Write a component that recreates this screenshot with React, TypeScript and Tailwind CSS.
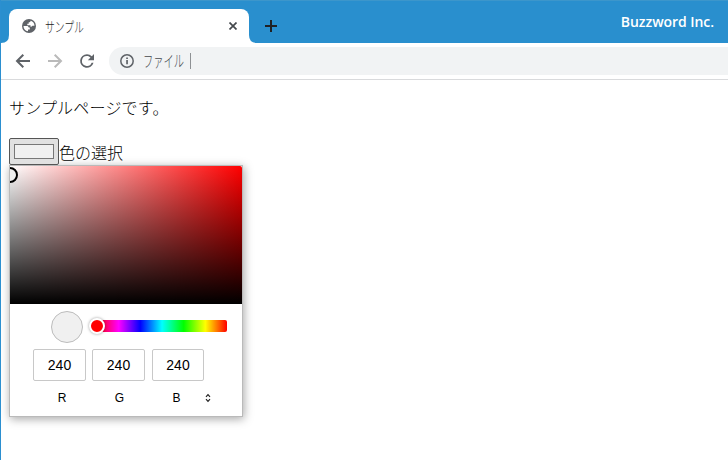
const ui = "font-['Liberation_Sans','Noto_Sans_CJK_JP',sans-serif]";
const jp = "font-['Noto_Sans_CJK_JP',sans-serif]";

function Tab() {
  return (
    <div className="relative ml-[8px] mt-[9px] flex h-[34px] w-[240px] items-center rounded-t-[8px] bg-white">
      <svg className="absolute -left-[8px] bottom-0 size-2" viewBox="0 0 8 8">
        <path d="M8 0v8H0q8 0 8-8z" fill="#fff" />
      </svg>
      <svg className="absolute -right-[8px] bottom-0 size-2" viewBox="0 0 8 8">
        <path d="M0 0v8h8q-8 0-8-8z" fill="#fff" />
      </svg>
      <svg className="ml-[13px] size-[14px] shrink-0" viewBox="0 0 14 14">
        <circle cx="7" cy="7" r="7" fill="#5f6368" />
        <path
          d="M1.5 7h3.2c1.3 0 1.8.6 2 1.5h1.1v2.1H6v1.7A5.5 5.5 0 0 1 1.5 7zM8.6 1.7c-.1 1.1-.7 1.5-1.9 1.5v1.6H5.3v1.4h3.2v1.6c1 .1 1.6-.3 1.9-1.1h2.1A5.5 5.5 0 0 0 8.6 1.7z"
          fill="#fff"
        />
      </svg>
      <span className={`${jp} ml-[9px] w-[56px] origin-left scale-x-[0.7] whitespace-nowrap text-[14px] font-light leading-4 text-[#222]`}>サンプル</span>
      <svg className="ml-auto mr-[12px] size-[8px]" viewBox="0 0 8 8">
        <path d="M.5.5l7 7M7.5.5l-7 7" stroke="#45494d" strokeWidth="1.7" />
      </svg>
    </div>
  );
}

function Toolbar() {
  return (
    <div className="flex h-[37px] items-center border-b border-[#d9dadc] bg-white">
      <svg className="ml-[14px] size-[16px] shrink-0" viewBox="0 0 16 16" fill="none" stroke="#5f6368" strokeWidth="2">
        <path d="M15 8H2.5M8.3 1.7L2 8l6.3 6.3" />
      </svg>
      <svg className="ml-[16px] size-[16px] shrink-0" viewBox="0 0 16 16" fill="none" stroke="#bababa" strokeWidth="2">
        <path d="M1 8h12.5M7.7 1.7L14 8l-6.3 6.3" />
      </svg>
      <svg className="ml-[16px] size-[16px] shrink-0" viewBox="0 0 16 16">
        <path d="M12.8 3.2A6.7 6.7 0 0 0 8 1.2a6.8 6.8 0 1 0 6.5 8.6h-1.9A5 5 0 1 1 8 3c1.4 0 2.6.6 3.5 1.5L8.8 7.2H15V1z" fill="#5f6368" />
      </svg>
      <div className="ml-[14px] flex h-7 flex-1 items-center rounded-l-full bg-[#f1f3f4]">
        <svg className="ml-[11px] size-[14px]" viewBox="0 0 14 14">
          <circle cx="7" cy="7" r="6.2" fill="none" stroke="#5f6368" strokeWidth="1.5" />
          <path d="M6.2 6h1.7v4.3H6.2zM6.2 3.4h1.7V5H6.2z" fill="#5f6368" />
        </svg>
        <span className="ml-[9px] w-[47px]">
          <span className={`${jp} relative -top-px block w-16 origin-left scale-x-[0.64] whitespace-nowrap text-[16px] font-light leading-5 text-[#45494d]`}>ファイル</span>
        </span>
        <span className="h-4 w-px bg-[#8e9194]" />
      </div>
    </div>
  );
}

function Channel({ name, width, shift }: { name: string; width: string; shift: string }) {
  return (
    <label className={`flex flex-col items-center ${width}`}>
      <span className="flex h-8 w-full items-center justify-center rounded-[2px] border border-[#c8c8c8] text-[14px] leading-4">240</span>
      <span className={`mt-[9px] text-[12px] leading-4 ${shift}`}>{name}</span>
    </label>
  );
}

function ColorPicker() {
  return (
    <div className="h-[252px] w-[234px] border border-[#bababa] bg-white text-black shadow-[1px_2px_9px_rgba(0,0,0,0.35)]">
      <div className="relative h-[138px] overflow-hidden rounded-tr-[2px] bg-[linear-gradient(to_top,#000,transparent),linear-gradient(to_right,#fff,#f00)]">
        <span className="absolute -left-2 top-px size-4 rounded-full border-2 border-black bg-[#f0f0f0]" />
      </div>
      <div className="flex h-[45px] pl-[41px] pt-[7px]">
        <span className="size-8 rounded-full border border-[#bcbcbc] bg-[#f0f0f0]" />
        <div className="relative ml-[14px] mt-[9px] h-3 w-[130px] rounded-[2px] bg-[linear-gradient(to_right,#f00,#f0f_16.67%,#00f_33.33%,#0ff_50%,#0f0_66.67%,#ff0_83.33%,#f00)]">
          <span className="absolute -left-2 -top-[2px] size-4 rounded-full border-2 border-white bg-[#f00] shadow-[0_0_3px_rgba(0,0,0,0.4)]" />
        </div>
      </div>
      <div className="flex pl-[23px]">
        <Channel name="R" width="w-[53px]" shift="pl-[5px]" />
        <span className="w-[6px]" />
        <Channel name="G" width="w-[53px]" shift="pl-[2px]" />
        <span className="w-[7px]" />
        <Channel name="B" width="w-[52px]" shift="pr-[3px]" />
        <svg className="mt-[44px] h-[10px] w-[8px]" viewBox="0 0 8 10" fill="none" stroke="#222" strokeWidth="1.2">
          <path d="M2 3.8L4 1.6l2 2.2M2 6.2l2 2.2 2-2.2" />
        </svg>
      </div>
    </div>
  );
}

export default function App() {
  return (
    <div className={`${ui} h-[460px] w-[728px] overflow-hidden border-l border-[#2b8fd0] bg-white`}>
      <header className="flex h-[43px] border-t border-[#3c96cb] bg-[#298fce] [&>div]:mt-[8px]">
        <Tab />
        <svg className="ml-[16px] mt-[19px] size-3" viewBox="0 0 12 12">
          <path d="M6 0v12M0 6h12" stroke="#202124" strokeWidth="2" />
        </svg>
        <span className="ml-auto mr-[14px] mt-[11px] font-['Open_Sans',sans-serif] text-[14px] font-semibold leading-5 tracking-[-0.05px] text-white">Buzzword Inc.</span>
      </header>
      <Toolbar />
      <main className="pl-2">
        <p className={`${jp} mt-[15px] text-[16px] font-light leading-6 tracking-[0.2px] text-black`}>サンプルページです。</p>
        <div className="mt-[19px] flex h-[27px] items-center">
          <span className="flex h-[27px] w-[50px] items-center justify-center rounded-[2px] border border-[#555] bg-[#e1e1e1]">
            <span className="h-[15px] w-10 border border-[#777] bg-[#f0f0f0]" />
          </span>
          <span className={`${jp} mt-px text-[16px] font-light leading-6 text-black`}>色の選択</span>
        </div>
        <ColorPicker />
      </main>
    </div>
  );
}
